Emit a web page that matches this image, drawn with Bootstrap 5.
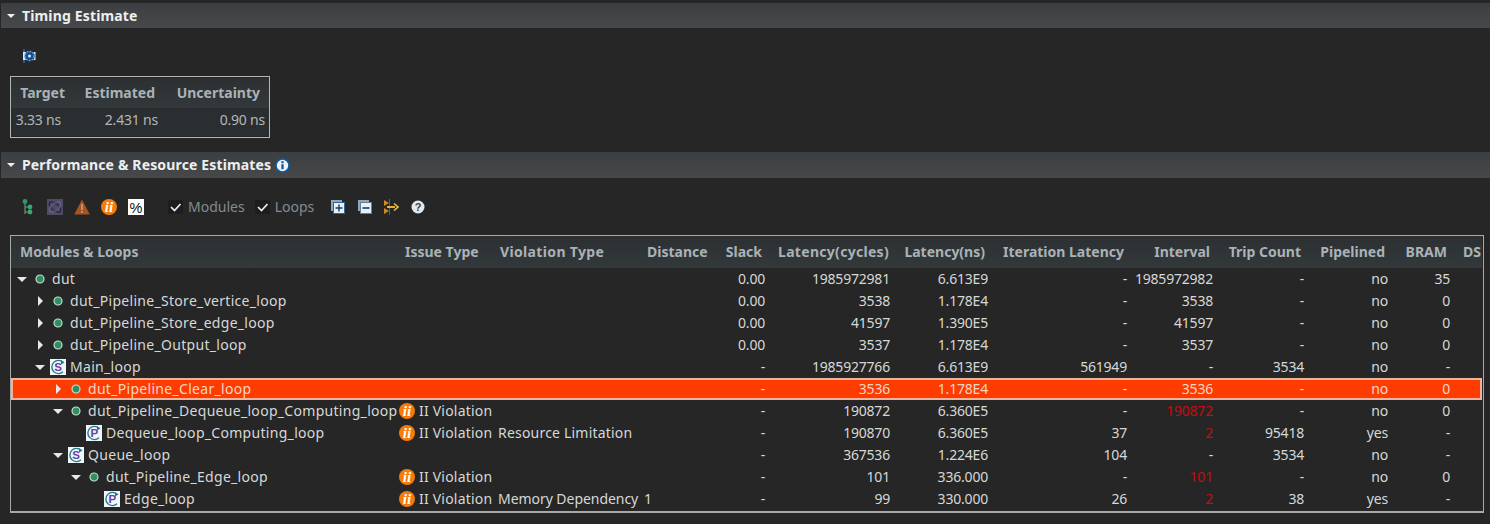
<!DOCTYPE html>
<html lang="en">
<head>
  <meta charset="UTF-8">
  <title>Synthesis Summary</title>
  <link href="https://cdn.jsdelivr.net/npm/bootstrap@5.3.0/dist/css/bootstrap.min.css" rel="stylesheet">
  <style>
    body {
      background-color: #262626;
      color: #d6d8d8;
      font-family: "Noto Sans", "Open Sans", sans-serif;
      font-size: 14px;
      line-height: 22px;
      padding-top: 3px;
      overflow: hidden;
    }
    svg { display: block; flex: none; }

    .sec-bar {
      height: 25px;
      margin-left: 1px;
      padding-left: 6px;
      background: linear-gradient(#3c3f41, #46484a);
      color: #eceff0;
      font-weight: 700;
      letter-spacing: .15px;
    }
    .sec-arrow {
      width: 0; height: 0;
      margin-right: 7px;
      border-left: 4px solid transparent;
      border-right: 4px solid transparent;
      border-top: 4px solid #eee;
    }
    .sec-one { margin-bottom: 20px; }
    .sec-two { margin-top: 14px; margin-bottom: 18px; height: 26px; }
    .clock-row { padding-left: 21px; height: 16px; margin-bottom: 12px; }

    .tool-row { height: 20px; padding-left: 20px; margin-bottom: 19px; color: #858b8f; gap: 11px; padding-top: 1px; }
    .tool-ic { width: 16px; height: 16px; }
    .chk { width: 15px; height: 14px; background: #1d1d1d; margin-right: 5px; }
    .after-pct { margin-left: 13px; }
    .after-mods { margin-left: -1px; }
    .after-loops { margin-left: 6px; }
    .push-2 { margin-left: 2px; }
    .push-1 { margin-left: 1px; }

    .timing-frame { width: 260px; height: 62px; margin-left: 10px; border: 1px solid #b4b6b6; padding-top: 1px; }
    .grid-frame { height: 278px; margin-left: 10px; margin-right: 6px; border: 1px solid #a8aaaa; border-bottom-width: 2px; overflow: hidden; }

    .est-tbl.table { table-layout: fixed; margin: 0; --bs-table-bg: transparent; --bs-table-color: #d6d8d8; width: 1471px; }
    .est-tbl.timing-tbl { width: 258px; }
    .est-tbl.table > :not(caption) > * > * {
      padding: 0;
      border: 0;
      white-space: nowrap;
      overflow: hidden;
      height: 22px;
      line-height: 22px;
      color: #d6d8d8;
      background: transparent;
      box-shadow: none;
      vertical-align: middle;
    }
    .est-tbl.table > thead > tr > th {
      background: linear-gradient(#2c3033, #33383b);
      color: #aab2b6;
      font-weight: 700;
      height: 32px;
    }
    .est-tbl.table > thead > tr > th.hl { text-align: left; padding-left: 9px; }
    .est-tbl.table > thead > tr > th.hl-issue { padding-left: 7px; }
    .est-tbl.table > thead > tr > th.hl-viol { padding-left: 4px; letter-spacing: .35px; }
    .est-tbl.table > thead > tr > th.hl-dist { padding-left: 5px; }
    .est-tbl.table > thead > tr > th.hr { text-align: right; padding-right: 7px; }
    .est-tbl.table > thead > tr > th.hr-cyc { padding-right: 5px; letter-spacing: .3px; }
    .est-tbl.table > thead > tr > th.hr-unc { padding-right: 9px; }
    .est-tbl.table > tbody > tr > td.num { text-align: right; padding-right: 4px; letter-spacing: -.2px; }
    .est-tbl.table > tbody > tr > td.first-val { padding-right: 11px; }
    .est-tbl.table > tbody > tr > td.pad-v { padding-left: 2px; letter-spacing: .2px; }
    .est-tbl.table > tbody > tr > td.pad-tight { padding-left: 2px; letter-spacing: -.05px; }
    .est-tbl.table > tbody > tr > td.late { color: #c40d0d; }

    .timing-tbl.table > thead > tr > th { height: 30px; }
    .timing-tbl.table > tbody > tr > td { height: 28px; line-height: 24px; padding-bottom: 4px; color: #b2b6b8; background: #2b2e30; letter-spacing: 0; }

    .est-tbl.table > tbody > tr.picked > td {
      background: #ff3c00;
      color: #f3d6c8;
      box-shadow: inset 0 2px 0 #f2b39c, inset 0 -2px 0 #f2b39c;
    }
    .est-tbl.table > tbody > tr.picked > td:first-child { box-shadow: inset 0 2px 0 #f2b39c, inset 0 -2px 0 #f2b39c, inset 2px 0 0 #f2b39c; }
    .est-tbl.table > tbody > tr.picked > td:last-child { box-shadow: inset 0 2px 0 #f2b39c, inset 0 -2px 0 #f2b39c, inset -2px 0 0 #f2b39c; }

    .tree-name { letter-spacing: .3px; }
    .lv0 { padding-left: 2px; }
    .lv1 { padding-left: 20px; }
    .lv2 { padding-left: 38px; }
    .lv3 { padding-left: 56px; }
    .lv4 { padding-left: 74px; }
    .twist { width: 18px; height: 22px; flex: none; display: flex; align-items: center; justify-content: center; }
    .tw-down { width: 0; height: 0; border-left: 5px solid transparent; border-right: 5px solid transparent; border-top: 5px solid #e8e8e8; }
    .tw-right { width: 0; height: 0; border-top: 5px solid transparent; border-bottom: 5px solid transparent; border-left: 5px solid #e8e8e8; }
    .node { width: 18px; flex: none; margin-right: 3px; display: flex; justify-content: center; }
    .issue-cell { padding-left: 1px; letter-spacing: .2px; }
    .issue-ic { margin-right: 4px; }
  </style>
</head>
<body>
  <svg width="0" height="0" class="position-absolute">
    <symbol id="dot" viewBox="0 0 10 10"><circle cx="5" cy="5" r="4" fill="#2f8f62" stroke="#c5dccf" stroke-width="1.2"/></symbol>
  </svg>

  <div class="sec-bar sec-one d-flex align-items-center"><span class="sec-arrow"></span>Timing Estimate</div>

  <div class="clock-row">
    <svg width="16" height="16" viewBox="0 0 16 16">
      <path d="M3 1v14" stroke="#2a7fd0" stroke-width="1.200"/>
      <path d="M2 4h3L3.600 8 5 12H2zM14.500 4H12.500L14 8l-1.500 4h2z" fill="#d8ebfa"/>
      <circle cx="8.500" cy="8" r="4.600" fill="#1a4a8c" stroke="#5aa8ea" stroke-width="1.400" stroke-dasharray="2 1"/>
      <circle cx="8.500" cy="8" r="1.600" fill="#d0e6f8"/>
    </svg>
  </div>

  <div class="timing-frame">
    <table class="table est-tbl timing-tbl">
      <colgroup><col style="width:61px"><col style="width:90px"><col style="width:107px"></colgroup>
      <thead><tr><th class="hr">Target</th><th class="hr">Estimated</th><th class="hr hr-unc">Uncertainty</th></tr></thead>
      <tbody><tr><td class="num first-val">3.33 ns</td><td class="num">2.431 ns</td><td class="num">0.90 ns</td></tr></tbody>
    </table>
  </div>

  <div class="sec-bar sec-two d-flex align-items-center">
    <span class="sec-arrow"></span>Performance &amp; Resource Estimates
    <svg class="ms-1" width="15" height="15" viewBox="0 0 15 15">
      <circle cx="7.500" cy="7.500" r="6.500" fill="#e9f3fb" stroke="#0f5c9c" stroke-width="1.600"/>
      <rect x="6.400" y="6.200" width="2.200" height="5" fill="#0f4f8c"/>
      <rect x="6.400" y="3.200" width="2.200" height="2" fill="#0f4f8c"/>
    </svg>
  </div>

  <div class="tool-row d-flex align-items-center">
    <svg class="tool-ic" viewBox="0 0 16 16">
      <path d="M5 3v12M5 8h4M5 13h4" stroke="#6f8d86" stroke-width="1.200" fill="none"/>
      <circle cx="5" cy="2.500" r="2.400" fill="#2f9a68"/><circle cx="10" cy="8" r="2.400" fill="#36a872"/><circle cx="10" cy="13" r="2.400" fill="#36a872"/>
    </svg>
    <svg class="tool-ic" viewBox="0 0 16 16">
      <rect width="16" height="16" fill="#4c4d5e"/>
      <ellipse cx="8" cy="8" rx="7" ry="3.400" transform="rotate(40 8 8)" fill="none" stroke="#2a2440" stroke-width="1.200"/>
      <ellipse cx="8" cy="8" rx="7" ry="3.400" transform="rotate(-40 8 8)" fill="none" stroke="#6e5a9c" stroke-width="1.200"/>
    </svg>
    <svg class="tool-ic" viewBox="0 0 16 16">
      <path d="M8 .5L15.800 15.500H.2z" fill="#a4551f"/><rect x="7.200" y="5" width="1.600" height="6" fill="#c9a080"/><rect x="7.200" y="12" width="1.600" height="1.800" fill="#c9a080"/>
    </svg>
    <svg class="tool-ic" viewBox="0 0 16 16"><circle cx="8" cy="8" r="8" fill="#f57c0c"/><text x="8" y="13" text-anchor="middle" font-family="Liberation Serif, serif" font-style="italic" font-weight="700" font-size="15" fill="#fff">ii</text></svg>
    <svg class="tool-ic" viewBox="0 0 16 16"><rect width="16" height="16" fill="#fff"/><text x="8" y="13.500" text-anchor="middle" font-family="Liberation Sans, sans-serif" font-size="14.500" fill="#111">%</text></svg>
    <div class="d-flex align-items-center after-pct">
      <svg class="chk" viewBox="0 0 15 14"><path d="M3 7l3.500 3.500L12.500 4" fill="none" stroke="#eee" stroke-width="1.700"/></svg>Modules
    </div>
    <div class="d-flex align-items-center after-mods">
      <svg class="chk" viewBox="0 0 15 14"><path d="M3 7l3.500 3.500L12.500 4" fill="none" stroke="#eee" stroke-width="1.700"/></svg>Loops
    </div>
    <svg class="after-loops" width="14" height="14" viewBox="0 0 14 14"><rect x="0" y="0" width="11" height="11" fill="#8fa7bd"/><rect x="2.500" y="2.500" width="11" height="11" fill="#e9f1f8" stroke="#2f6596"/><path d="M8 4.500v7M4.500 8h7" stroke="#123d6a" stroke-width="1.400"/></svg>
    <svg class="push-2" width="14" height="14" viewBox="0 0 14 14"><rect x="0" y="0" width="11" height="11" fill="#8fa7bd"/><rect x="2.500" y="2.500" width="11" height="11" fill="#e9f1f8" stroke="#6c7d8c"/><path d="M4.500 8h7" stroke="#123d6a" stroke-width="1.600"/></svg>
    <svg class="tool-ic" viewBox="0 0 16 16"><path d="M1 1l5 3-5 3zM1 9l5 3-5 3z" fill="#d08a1c"/><path d="M6.500 0v16" stroke="#56606a"/><path d="M4 8h8" stroke="#f4c040" stroke-width="1.800"/><path d="M11 4.500l4 3.500-4 3.500" fill="none" stroke="#f4c040" stroke-width="1.600"/></svg>
    <svg class="push-1" width="14" height="14" viewBox="0 0 14 14"><circle cx="7" cy="7" r="6.500" fill="#e6e8ea"/><text x="7" y="11" text-anchor="middle" font-family="Liberation Sans, sans-serif" font-size="11" font-weight="700" fill="#3a4048">?</text></svg>
  </div>

  <div class="grid-frame">
    <table class="table est-tbl">
      <colgroup>
        <col style="width:387px"><col style="width:98px"><col style="width:146px"><col style="width:72px"><col style="width:55px"><col style="width:125px"><col style="width:98px"><col style="width:139px"><col style="width:86px"><col style="width:91px"><col style="width:84px"><col style="width:62px"><col style="width:28px">
      </colgroup>
      <thead>
        <tr><th class="hl">Modules &amp; Loops</th><th class="hl hl-issue">Issue Type</th><th class="hl hl-viol">Violation Type</th><th class="hl hl-dist">Distance</th><th class="hr">Slack</th><th class="hr hr-cyc">Latency(cycles)</th><th class="hr">Latency(ns)</th><th class="hr">Iteration Latency</th><th class="hr">Interval</th><th class="hr">Trip Count</th><th class="hr">Pipelined</th><th class="hr">BRAM</th><th class="hl">DS</th></tr>
      </thead>
      <tbody>
        <tr>
          <td><div class="d-flex align-items-center lv0 tree-name"><span class="twist"><i class="tw-down"></i></span><span class="node"><svg width="10" height="10"><use href="#dot"/></svg></span>dut</div></td>
          <td></td><td></td><td></td><td class="num">0.00</td><td class="num">1985972981</td><td class="num">6.613E9</td><td class="num">-</td><td class="num">1985972982</td><td class="num">-</td><td class="num">no</td><td class="num">35</td><td></td>
        </tr>
        <tr>
          <td><div class="d-flex align-items-center lv1 tree-name"><span class="twist"><i class="tw-right"></i></span><span class="node"><svg width="10" height="10"><use href="#dot"/></svg></span>dut_Pipeline_Store_vertice_loop</div></td>
          <td></td><td></td><td></td><td class="num">0.00</td><td class="num">3538</td><td class="num">1.178E4</td><td class="num">-</td><td class="num">3538</td><td class="num">-</td><td class="num">no</td><td class="num">0</td><td></td>
        </tr>
        <tr>
          <td><div class="d-flex align-items-center lv1 tree-name"><span class="twist"><i class="tw-right"></i></span><span class="node"><svg width="10" height="10"><use href="#dot"/></svg></span>dut_Pipeline_Store_edge_loop</div></td>
          <td></td><td></td><td></td><td class="num">0.00</td><td class="num">41597</td><td class="num">1.390E5</td><td class="num">-</td><td class="num">41597</td><td class="num">-</td><td class="num">no</td><td class="num">0</td><td></td>
        </tr>
        <tr>
          <td><div class="d-flex align-items-center lv1 tree-name"><span class="twist"><i class="tw-right"></i></span><span class="node"><svg width="10" height="10"><use href="#dot"/></svg></span>dut_Pipeline_Output_loop</div></td>
          <td></td><td></td><td></td><td class="num">0.00</td><td class="num">3537</td><td class="num">1.178E4</td><td class="num">-</td><td class="num">3537</td><td class="num">-</td><td class="num">no</td><td class="num">0</td><td></td>
        </tr>
        <tr>
          <td><div class="d-flex align-items-center lv1 tree-name"><span class="twist"><i class="tw-down"></i></span><span class="node"><svg width="16" height="16" viewBox="0 0 16 16"><rect width="16" height="16" fill="#f2f6f8"/><path d="M13 3.200A6.600 6.600 0 1 0 13 12.800" fill="none" stroke="#1b7f8c" stroke-width="1.400"/><path d="M11 1l3.500 2.500L11 5.500z" fill="#1b7f8c"/><text x="8.200" y="12.200" text-anchor="middle" font-family="Liberation Sans, sans-serif" font-size="11.500" font-weight="700" fill="#6a3fb0">S</text></svg></span>Main_loop</div></td>
          <td></td><td></td><td></td><td class="num">-</td><td class="num">1985927766</td><td class="num">6.613E9</td><td class="num">561949</td><td class="num">-</td><td class="num">3534</td><td class="num">no</td><td class="num">-</td><td></td>
        </tr>
        <tr class="picked">
          <td><div class="d-flex align-items-center lv2 tree-name"><span class="twist"><i class="tw-right"></i></span><span class="node"><svg width="10" height="10"><use href="#dot"/></svg></span>dut_Pipeline_Clear_loop</div></td>
          <td></td><td></td><td></td><td class="num">-</td><td class="num">3536</td><td class="num">1.178E4</td><td class="num">-</td><td class="num">3536</td><td class="num">-</td><td class="num">no</td><td class="num">0</td><td></td>
        </tr>
        <tr>
          <td><div class="d-flex align-items-center lv2 tree-name"><span class="twist"><i class="tw-down"></i></span><span class="node"><svg width="10" height="10"><use href="#dot"/></svg></span>dut_Pipeline_Dequeue_loop_Computing_loop</div></td>
          <td><div class="d-flex align-items-center issue-cell"><svg class="issue-ic" width="16" height="16" viewBox="0 0 16 16"><circle cx="8" cy="8" r="8" fill="#f57c0c"/><text x="8" y="13" text-anchor="middle" font-family="Liberation Serif, serif" font-style="italic" font-weight="700" font-size="15" fill="#fff">ii</text></svg>II Violation</div></td><td></td><td></td><td class="num">-</td><td class="num">190872</td><td class="num">6.360E5</td><td class="num">-</td><td class="num late">190872</td><td class="num">-</td><td class="num">no</td><td class="num">0</td><td></td>
        </tr>
        <tr>
          <td><div class="d-flex align-items-center lv3 tree-name"><span class="twist"></span><span class="node"><svg width="16" height="16" viewBox="0 0 16 16"><rect width="16" height="16" fill="#f2f6f8"/><path d="M13 3.200A6.600 6.600 0 1 0 13 12.800" fill="none" stroke="#1b7f8c" stroke-width="1.400"/><path d="M11 1l3.500 2.500L11 5.500z" fill="#1b7f8c"/><text x="8.400" y="12.200" text-anchor="middle" font-family="Liberation Sans, sans-serif" font-size="11.500" font-weight="700" fill="#6a3fb0">P</text></svg></span>Dequeue_loop_Computing_loop</div></td>
          <td><div class="d-flex align-items-center issue-cell"><svg class="issue-ic" width="16" height="16" viewBox="0 0 16 16"><circle cx="8" cy="8" r="8" fill="#f57c0c"/><text x="8" y="13" text-anchor="middle" font-family="Liberation Serif, serif" font-style="italic" font-weight="700" font-size="15" fill="#fff">ii</text></svg>II Violation</div></td><td class="pad-v">Resource Limitation</td><td></td><td class="num">-</td><td class="num">190870</td><td class="num">6.360E5</td><td class="num">37</td><td class="num late">2</td><td class="num">95418</td><td class="num">yes</td><td class="num">-</td><td></td>
        </tr>
        <tr>
          <td><div class="d-flex align-items-center lv2 tree-name"><span class="twist"><i class="tw-down"></i></span><span class="node"><svg width="16" height="16" viewBox="0 0 16 16"><rect width="16" height="16" fill="#f2f6f8"/><path d="M13 3.200A6.600 6.600 0 1 0 13 12.800" fill="none" stroke="#1b7f8c" stroke-width="1.400"/><path d="M11 1l3.500 2.500L11 5.500z" fill="#1b7f8c"/><text x="8.200" y="12.200" text-anchor="middle" font-family="Liberation Sans, sans-serif" font-size="11.500" font-weight="700" fill="#6a3fb0">S</text></svg></span>Queue_loop</div></td>
          <td></td><td></td><td></td><td class="num">-</td><td class="num">367536</td><td class="num">1.224E6</td><td class="num">104</td><td class="num">-</td><td class="num">3534</td><td class="num">no</td><td class="num">-</td><td></td>
        </tr>
        <tr>
          <td><div class="d-flex align-items-center lv3 tree-name"><span class="twist"><i class="tw-down"></i></span><span class="node"><svg width="10" height="10"><use href="#dot"/></svg></span>dut_Pipeline_Edge_loop</div></td>
          <td><div class="d-flex align-items-center issue-cell"><svg class="issue-ic" width="16" height="16" viewBox="0 0 16 16"><circle cx="8" cy="8" r="8" fill="#f57c0c"/><text x="8" y="13" text-anchor="middle" font-family="Liberation Serif, serif" font-style="italic" font-weight="700" font-size="15" fill="#fff">ii</text></svg>II Violation</div></td><td></td><td></td><td class="num">-</td><td class="num">101</td><td class="num">336.000</td><td class="num">-</td><td class="num late">101</td><td class="num">-</td><td class="num">no</td><td class="num">0</td><td></td>
        </tr>
        <tr>
          <td><div class="d-flex align-items-center lv4 tree-name"><span class="twist"></span><span class="node"><svg width="16" height="16" viewBox="0 0 16 16"><rect width="16" height="16" fill="#f2f6f8"/><path d="M13 3.200A6.600 6.600 0 1 0 13 12.800" fill="none" stroke="#1b7f8c" stroke-width="1.400"/><path d="M11 1l3.500 2.500L11 5.500z" fill="#1b7f8c"/><text x="8.400" y="12.200" text-anchor="middle" font-family="Liberation Sans, sans-serif" font-size="11.500" font-weight="700" fill="#6a3fb0">P</text></svg></span>Edge_loop</div></td>
          <td><div class="d-flex align-items-center issue-cell"><svg class="issue-ic" width="16" height="16" viewBox="0 0 16 16"><circle cx="8" cy="8" r="8" fill="#f57c0c"/><text x="8" y="13" text-anchor="middle" font-family="Liberation Serif, serif" font-style="italic" font-weight="700" font-size="15" fill="#fff">ii</text></svg>II Violation</div></td><td class="pad-tight">Memory Dependency</td><td class="pad-v">1</td><td class="num">-</td><td class="num">99</td><td class="num">330.000</td><td class="num">26</td><td class="num late">2</td><td class="num">38</td><td class="num">yes</td><td class="num">-</td><td></td>
        </tr>
      </tbody>
    </table>
  </div>
  <script src="https://cdn.jsdelivr.net/npm/bootstrap@5.3.0/dist/js/bootstrap.bundle.min.js"></script>
</body>
</html>
